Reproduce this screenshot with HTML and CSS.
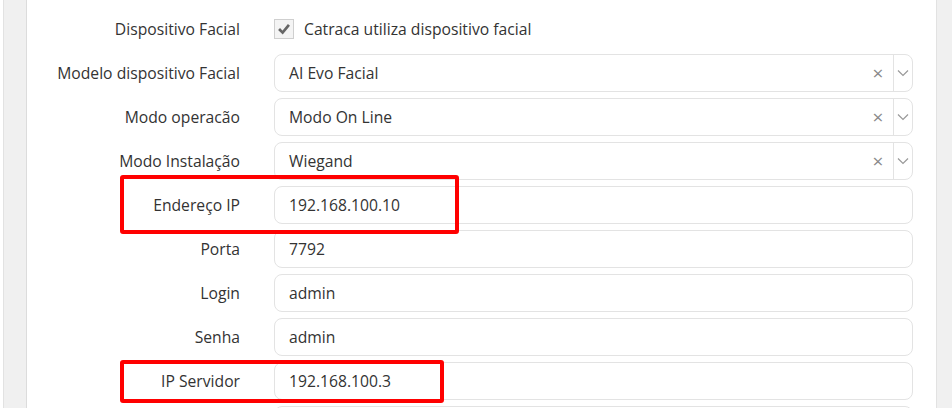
FILE: index.html
```html
<!DOCTYPE html>
<html lang="pt-BR">
<head>
<meta charset="utf-8">
<title>Dispositivo Facial</title>
<link rel="stylesheet" href="styles.css">
</head>
<body>
<div class="page">
  <div class="gutter-left"></div>
  <main class="panel">
    <form class="form">
      <label class="lbl">Dispositivo Facial</label>
      <div class="check-field">
        <span class="checkbox">
          <svg viewBox="0 0 20 20" width="20" height="20"><path d="M4.5 10 L8.5 14 L15.5 5.5" fill="none" stroke="#666" stroke-width="3"/></svg>
        </span>
        <span class="check-text">Catraca utiliza dispositivo facial</span>
      </div>

      <label class="lbl">Modelo dispositivo Facial</label>
      <div class="select">
        <span class="value">AI Evo Facial</span>
        <span class="clear">×</span>
        <span class="arrow"><svg viewBox="0 0 12 8" width="12" height="8"><path d="M1 1.5 L6 6.5 L11 1.5" fill="none" stroke="#999" stroke-width="1.2"/></svg></span>
      </div>

      <label class="lbl">Modo operacão</label>
      <div class="select">
        <span class="value">Modo On Line</span>
        <span class="clear">×</span>
        <span class="arrow"><svg viewBox="0 0 12 8" width="12" height="8"><path d="M1 1.5 L6 6.5 L11 1.5" fill="none" stroke="#999" stroke-width="1.2"/></svg></span>
      </div>

      <label class="lbl">Modo Instalação</label>
      <div class="select">
        <span class="value">Wiegand</span>
        <span class="clear">×</span>
        <span class="arrow"><svg viewBox="0 0 12 8" width="12" height="8"><path d="M1 1.5 L6 6.5 L11 1.5" fill="none" stroke="#999" stroke-width="1.2"/></svg></span>
      </div>

      <label class="lbl">Endereço IP</label>
      <div class="input">192.168.100.10</div>

      <label class="lbl">Porta</label>
      <div class="input">7792</div>

      <label class="lbl">Login</label>
      <div class="input">admin</div>

      <label class="lbl">Senha</label>
      <div class="input">admin</div>

      <label class="lbl">IP Servidor</label>
      <div class="input">192.168.100.3</div>

      <label class="lbl"></label>
      <div class="input"></div>
    </form>
    <div class="mark mark-ip"></div>
    <div class="mark mark-server"></div>
  </main>
  <div class="gutter-right"></div>
</div>
</body>
</html>
```

FILE: styles.css
```css
* { box-sizing: border-box; }
html, body {
  margin: 0;
  padding: 0;
  background: #fff;
  font-family: "Open Sans", "Noto Sans", sans-serif;
  font-size: 15.7px;
  color: #333;
}
.page {
  display: flex;
  height: 408px;
  overflow: hidden;
}
.gutter-left {
  width: 24px;
  margin-left: 3px;
  flex: none;
  background: #f0f0f0;
  border-left: 1px solid #e2e2e2;
  border-right: 1px solid #dcdcdc;
}
.gutter-right {
  width: 16px;
  flex: none;
  background: #f0f0f0;
  border-left: 1px solid #e2e2e2;
}
.panel {
  flex: 1;
  position: relative;
  background: #fff;
}
.form {
  display: grid;
  grid-template-columns: 213px 1fr;
  grid-auto-rows: 38px;
  column-gap: 34px;
  row-gap: 6px;
  padding: 10px 23px 0 0;
}
.lbl {
  display: flex;
  align-items: center;
  justify-content: flex-end;
  color: #333;
  white-space: nowrap;
}
.check-field {
  display: flex;
  align-items: center;
  gap: 10px;
}
.checkbox {
  width: 20px;
  height: 20px;
  border: 1px solid #cfcfcf;
  background: #f4f4f4;
  display: flex;
  align-items: center;
  justify-content: center;
}
.checkbox svg { display: block; }
.select, .input {
  display: flex;
  align-items: center;
  border: 1px solid #e3e3e3;
  border-radius: 8px;
  background: #fff;
  padding-left: 14px;
  color: #333;
}
.select .value { flex: 1; }
.select .clear {
  color: #8a8a8a;
  font-size: 19px;
  width: 30px;
  text-align: center;
  line-height: 1;
}
.select .arrow {
  align-self: stretch;
  width: 19px;
  border-left: 1px solid #e3e3e3;
  display: flex;
  align-items: center;
  justify-content: center;
}
.mark {
  position: absolute;
  border: 4px solid #ff0000;
  border-radius: 3px;
}
.mark-ip {
  left: 93px;
  top: 175px;
  width: 339px;
  height: 59px;
}
.mark-server {
  left: 93px;
  top: 360px;
  width: 324px;
  height: 43px;
}
```
